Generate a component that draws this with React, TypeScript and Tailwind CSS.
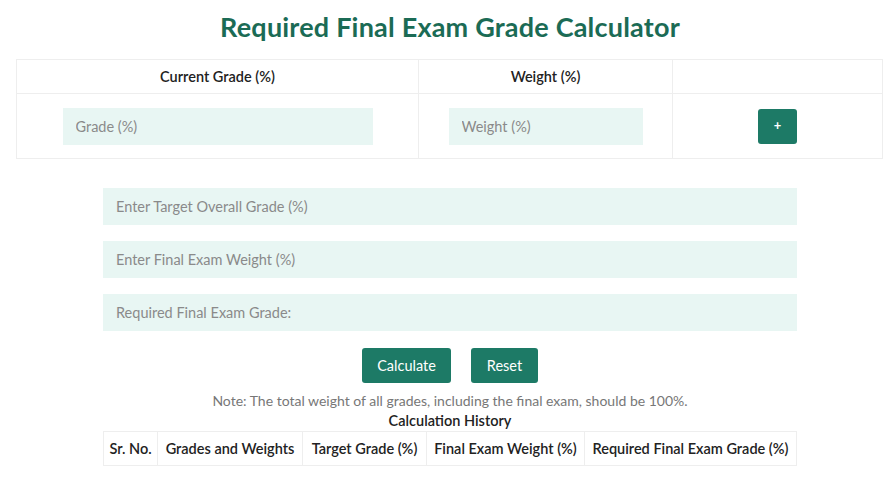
import React from "react";

export default function App() {
  const font = { fontFamily: "Lato, 'Noto Sans', sans-serif" };
  const ph = "placeholder:text-[#8a8a8a]";
  return (
    <div className="w-[894px] h-[500px] bg-white text-[#222] overflow-hidden" style={font}>
      <div className="w-[900px]">
        <h1 className="text-center text-[27px] font-bold text-[#1b6b55] pt-[11px] h-[59px] leading-[32px] tracking-[0.2px]">
          Required Final Exam Grade Calculator
        </h1>
        <div className="pl-[16px]">
          <table className="w-[867px] border-collapse table-fixed">
            <thead>
              <tr className="h-[34px]">
                <th className="w-[402px] border border-[#eeeeee] text-[14.5px] font-semibold text-[#222]">Current Grade (%)</th>
                <th className="w-[254px] border border-[#eeeeee] text-[14.5px] font-semibold text-[#222]">Weight (%)</th>
                <th className="border border-[#eeeeee]"></th>
              </tr>
            </thead>
            <tbody>
              <tr className="h-[65px]">
                <td className="border border-[#eeeeee]">
                  <div className="flex justify-center">
                    <input className={`w-[310px] h-[37px] bg-[#e8f6f3] px-[13px] text-[14.5px] outline-none ${ph}`} placeholder="Grade (%)" />
                  </div>
                </td>
                <td className="border border-[#eeeeee]">
                  <div className="flex justify-center">
                    <input className={`w-[194px] h-[37px] bg-[#e8f6f3] px-[13px] text-[14.5px] outline-none ${ph}`} placeholder="Weight (%)" />
                  </div>
                </td>
                <td className="border border-[#eeeeee]">
                  <div className="flex justify-center">
                    <button className="w-[39px] h-[35px] rounded-[3px] bg-[#1d7a66] text-white text-[13px] font-bold">+</button>
                  </div>
                </td>
              </tr>
            </tbody>
          </table>
        </div>
        <div className="w-[694px] mx-auto mt-[29px] flex flex-col gap-[16px]">
          <input className={`w-full h-[37px] bg-[#e8f6f3] px-[13px] text-[14.5px] outline-none ${ph}`} placeholder="Enter Target Overall Grade (%)" />
          <input className={`w-full h-[37px] bg-[#e8f6f3] px-[13px] text-[14.5px] outline-none ${ph}`} placeholder="Enter Final Exam Weight (%)" />
          <input className={`w-full h-[37px] bg-[#e8f6f3] px-[13px] text-[14.5px] outline-none ${ph}`} placeholder="Required Final Exam Grade:" readOnly />
        </div>
        <div className="flex justify-center gap-[20px] mt-[17px]">
          <button className="w-[89px] h-[35px] rounded-[3px] bg-[#1d7a66] text-white text-[14.5px]">Calculate</button>
          <button className="w-[67px] h-[35px] rounded-[3px] bg-[#1d7a66] text-white text-[14.5px]">Reset</button>
        </div>
        <p className="text-center text-[14px] text-[#777] mt-[9px] leading-[18px]">
          Note: The total weight of all grades, including the final exam, should be 100%.
        </p>
        <p className="text-center text-[14.5px] text-[#222] font-semibold leading-[20px] mt-[1px]">Calculation History</p>
        <table className="w-[694px] mx-auto border-collapse table-fixed">
          <thead>
            <tr className="h-[34px] text-[14.5px] text-[#222]">
              <th className="w-[54px] border border-[#eeeeee] font-semibold">Sr. No.</th>
              <th className="w-[145px] border border-[#eeeeee] font-semibold">Grades and Weights</th>
              <th className="w-[124px] border border-[#eeeeee] font-semibold">Target Grade (%)</th>
              <th className="w-[158px] border border-[#eeeeee] font-semibold">Final Exam Weight (%)</th>
              <th className="border border-[#eeeeee] font-semibold">Required Final Exam Grade (%)</th>
            </tr>
          </thead>
        </table>
      </div>
    </div>
  );
}
